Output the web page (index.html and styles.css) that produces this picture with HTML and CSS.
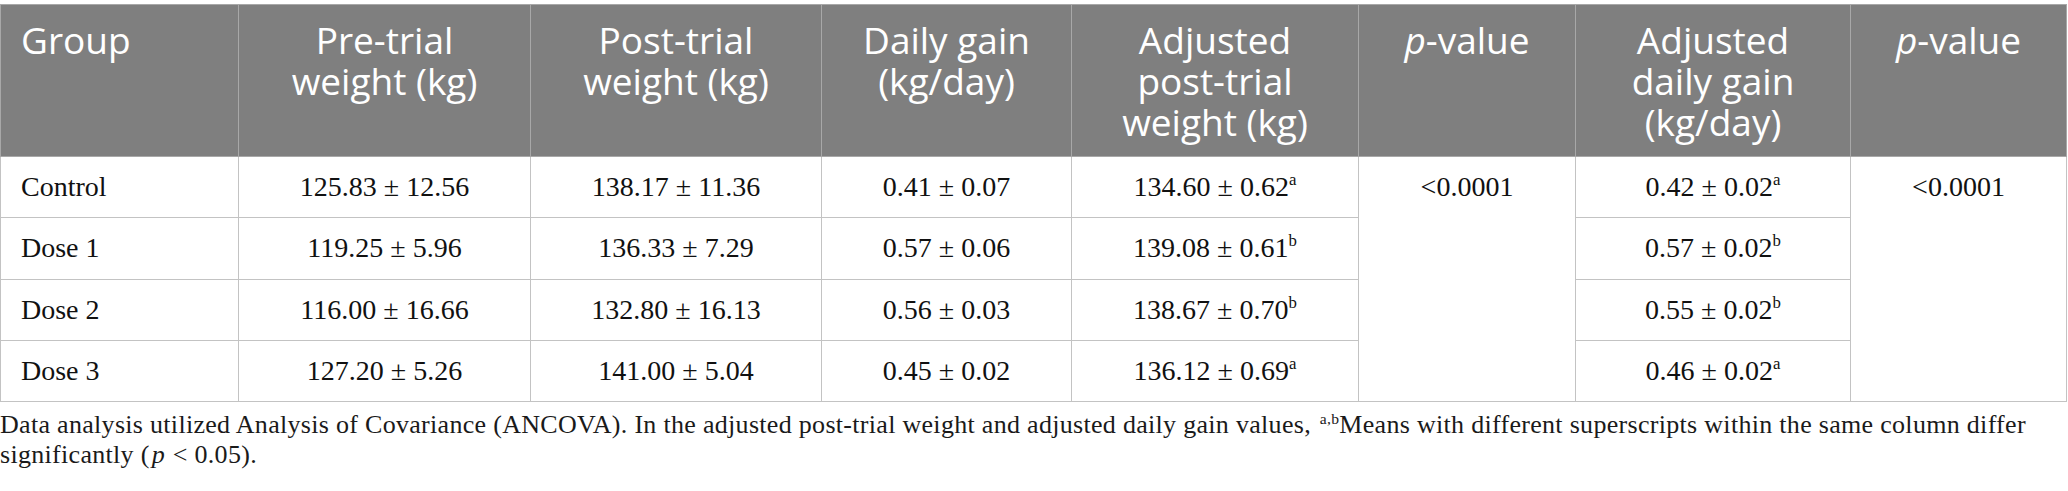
FILE: index.html
```html
<!DOCTYPE html>
<html lang="en">
<head>
<meta charset="utf-8">
<title>Table</title>
<link rel="stylesheet" href="styles.css">
</head>
<body>
<div class="wrap">
  <table class="data">
    <colgroup>
      <col class="c1"><col class="c2"><col class="c3"><col class="c4"><col class="c5"><col class="c6"><col class="c7"><col class="c8">
    </colgroup>
    <thead>
      <tr>
        <th class="left">Group</th>
        <th>Pre-trial weight (kg)</th>
        <th>Post-trial weight (kg)</th>
        <th>Daily gain (kg/day)</th>
        <th>Adjusted post-trial weight (kg)</th>
        <th><i>p</i>-value</th>
        <th>Adjusted daily gain (kg/day)</th>
        <th><i>p</i>-value</th>
      </tr>
    </thead>
    <tbody>
      <tr>
        <td class="left">Control</td>
        <td>125.83 ± 12.56</td>
        <td>138.17 ± 11.36</td>
        <td>0.41 ± 0.07</td>
        <td>134.60 ± 0.62<sup>a</sup></td>
        <td rowspan="4" class="span">&lt;0.0001</td>
        <td>0.42 ± 0.02<sup>a</sup></td>
        <td rowspan="4" class="span">&lt;0.0001</td>
      </tr>
      <tr>
        <td class="left">Dose 1</td>
        <td>119.25 ± 5.96</td>
        <td>136.33 ± 7.29</td>
        <td>0.57 ± 0.06</td>
        <td>139.08 ± 0.61<sup>b</sup></td>
        <td>0.57 ± 0.02<sup>b</sup></td>
      </tr>
      <tr>
        <td class="left">Dose 2</td>
        <td>116.00 ± 16.66</td>
        <td>132.80 ± 16.13</td>
        <td>0.56 ± 0.03</td>
        <td>138.67 ± 0.70<sup>b</sup></td>
        <td>0.55 ± 0.02<sup>b</sup></td>
      </tr>
      <tr>
        <td class="left">Dose 3</td>
        <td>127.20 ± 5.26</td>
        <td>141.00 ± 5.04</td>
        <td>0.45 ± 0.02</td>
        <td>136.12 ± 0.69<sup>a</sup></td>
        <td>0.46 ± 0.02<sup>a</sup></td>
      </tr>
    </tbody>
  </table>
  <p class="note">Data analysis utilized Analysis of Covariance (ANCOVA). In the adjusted post-trial weight and adjusted daily gain values, <sup>a,b</sup>Means with different superscripts within the same column differ significantly (<i>p</i> &lt; 0.05).</p>
</div>
</body>
</html>
```
FILE: styles.css
```css
html, body {
  margin: 0;
  padding: 0;
  background: #ffffff;
}

.wrap {
  padding-top: 4px;
  width: 2067px;
}

.data {
  border-collapse: collapse;
  table-layout: fixed;
  width: 2067px;
}

.c1 { width: 238px; }
.c2 { width: 292px; }
.c3 { width: 291px; }
.c4 { width: 250px; }
.c5 { width: 287px; }
.c6 { width: 217px; }
.c7 { width: 275px; }
.c8 { width: 216px; }

.data th {
  background: #7f7f7f;
  color: #ffffff;
  font-family: "Open Sans", "Noto Sans", sans-serif;
  font-weight: 400;
  font-size: 37px;
  line-height: 41px;
  text-align: center;
  vertical-align: top;
  padding: 14px 20px 14px;
  border: 1px solid #a8a8a8;
  height: 123px;
  box-sizing: content-box;
}

.data th i {
  font-style: italic;
}

.data td {
  font-family: "Liberation Serif", "Times New Roman", serif;
  font-size: 28px;
  line-height: 34.25px;
  color: #111111;
  text-align: center;
  vertical-align: middle;
  padding: 13px 20px 13px;
  border: 1px solid #c3c3c3;
}

.data td.span {
  vertical-align: top;
}

.data .left {
  text-align: left;
}

.data sup {
  font-size: 0.6em;
  line-height: 0;
  vertical-align: 0.65em;
}

.note {
  margin: 8px 0 0;
  font-family: "Liberation Serif", "Times New Roman", serif;
  font-size: 26px;
  line-height: 30px;
  color: #1a1a1a;
  letter-spacing: 0.3px;
}

.note i {
  padding: 0 1px 0 2px;
}

.note sup {
  font-size: 0.6em;
  line-height: 0;
  vertical-align: 0.6em;
  margin-left: 2px;
}
```
